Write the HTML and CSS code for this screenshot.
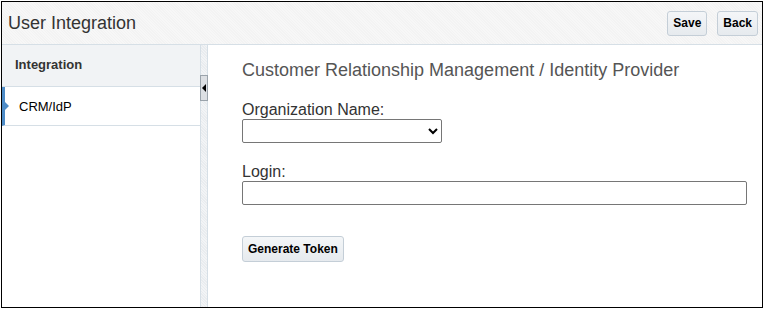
FILE: index.html
```html
<!DOCTYPE html>
<html>
<head>
  <title>User Integration</title>
  <link rel="stylesheet" href="styles.css">
</head>
<body>
  <div class="frame">
    <div class="header">
      <h1>User Integration</h1>
      <div class="actions">
        <button class="btn">Save</button>
        <button class="btn">Back</button>
      </div>
    </div>

    <div class="main">
      <div class="sidebar">
        <div class="sidebar-title">Integration</div>
        <div class="nav-item active">CRM/IdP</div>
      </div>

      <div class="splitter">
        <span class="collapse"></span>
      </div>

      <div class="content">
        <h2>Customer Relationship Management / Identity Provider</h2>

        <div class="field">
          <label for="orgName">Organization Name:</label>
          <select id="orgName" class="org-select">
            <option></option>
          </select>
        </div>

        <div class="field">
          <label for="login">Login:</label>
          <input type="text" id="login" class="login-input">
        </div>

        <button class="btn token-btn">Generate Token</button>
      </div>
    </div>
  </div>
</body>
</html>
```

FILE: styles.css
```css
body {
  margin: 0;
  padding: 1px;
  font-family: 'Liberation Sans', Arial, sans-serif;
  color: #333333;
  background-color: #ffffff;
}

.frame {
  width: 760px;
  height: 305px;
  border: 1px solid #000000;
  display: flex;
  flex-direction: column;
}

.header {
  height: 42px;
  display: flex;
  align-items: center;
  justify-content: space-between;
  padding: 0 4px 0 6px;
  border-bottom: 1px solid #d6dfe6;
  background: repeating-linear-gradient(45deg, #f7f7f7 0, #f7f7f7 1px, #f3f3f3 1px, #f3f3f3 2px);
}

h1 {
  margin: 0;
  font-size: 18px;
  font-weight: normal;
  color: #333333;
}

.actions {
  display: flex;
  gap: 10px;
}

.btn {
  font-family: 'Liberation Sans', Arial, sans-serif;
  font-size: 12px;
  font-weight: bold;
  color: #000000;
  background: linear-gradient(#f4f6f8, #e6eaee);
  border: 1px solid #c4ced7;
  border-radius: 3px;
  height: 25px;
  padding: 0 5px;
}

.main {
  flex: 1;
  display: flex;
}

.sidebar {
  width: 198px;
  border-right: 1px solid #d6dfe6;
  background-color: #ffffff;
}

.sidebar-title {
  height: 42px;
  box-sizing: border-box;
  display: flex;
  align-items: center;
  padding: 0 0 3px 13px;
  font-size: 13px;
  font-weight: bold;
  color: #333333;
  background-color: #f1f3f5;
  border-bottom: 1px solid #d6dfe6;
}

.nav-item {
  position: relative;
  height: 38px;
  display: flex;
  align-items: center;
  padding-left: 17px;
  font-size: 13px;
  color: #000000;
  border-bottom: 1px solid #d6dfe6;
}

.nav-item.active {
  border-left: 3px solid #4e8cc7;
  padding-left: 14px;
}

.nav-item.active::before {
  content: "";
  position: absolute;
  left: 0;
  top: 15px;
  border-top: 4px solid transparent;
  border-bottom: 4px solid transparent;
  border-left: 4px solid #4e8cc7;
}

.splitter {
  width: 6px;
  background: repeating-linear-gradient(45deg, #f2f4f6 0, #f2f4f6 1px, #e9ecef 1px, #e9ecef 2px);
  border-right: 1px solid #d6dfe6;
  position: relative;
}

.collapse {
  position: absolute;
  left: -1px;
  top: 30px;
  width: 6px;
  height: 24px;
  background-color: #dcdfe3;
  border: 1px solid #9aa3ab;
}

.collapse::after {
  content: "";
  position: absolute;
  left: 1px;
  top: 8px;
  border-top: 4px solid transparent;
  border-bottom: 4px solid transparent;
  border-right: 4px solid #000000;
}

.content {
  flex: 1;
  padding: 15px 15px 0 34px;
}

h2 {
  margin: 0 0 20px;
  font-size: 18px;
  font-weight: normal;
  color: #555555;
}

.field {
  display: flex;
  flex-direction: column;
  align-items: flex-start;
  margin-bottom: 20px;
}

label {
  font-size: 16px;
  color: #333333;
  line-height: 18px;
}

.org-select {
  box-sizing: border-box;
  width: 200px;
  height: 24px;
  border: 1px solid #767676;
  border-radius: 2px;
  background-color: #ffffff;
}

.login-input {
  box-sizing: border-box;
  width: 505px;
  height: 24px;
  border: 1px solid #767676;
  border-radius: 2px;
}

.token-btn {
  margin-top: 11px;
  height: 26px;
}
```
